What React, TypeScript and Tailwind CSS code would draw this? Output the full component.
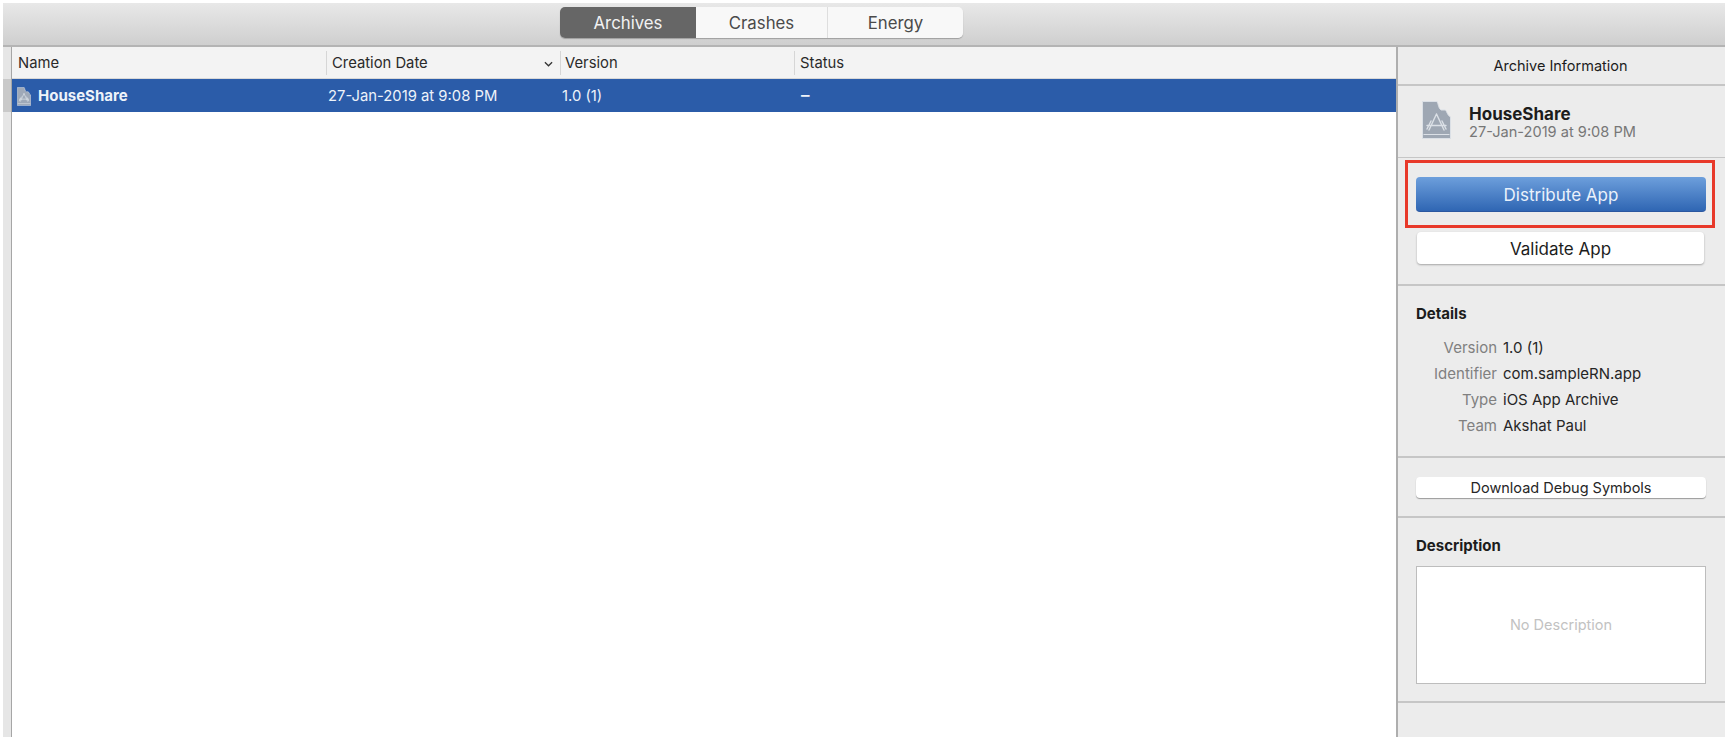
import React from 'react';

const FONT = "font-['Inter','Noto_Sans',sans-serif]";

const ArchiveIcon: React.FC<{ className?: string; fill: string; line: string }> = ({ className, fill, line }) => (
  <svg viewBox="0 0 29 38" className={className}>
    <path d="M0.5 0.5H15C16.5 3 16.5 8 19 9H23C24.5 9 25 14 28.5 16V37.5H0.5Z" fill={fill} stroke={line} strokeWidth="1" />
    <path d="M1.5 33.5H27.5" stroke={line} strokeWidth="1" fill="none" />
    <path d="M14.5 13L7 29M14.5 13L22 29M5 24.5H24M9 20L5 28M20 20L24 28" stroke={line} strokeWidth="1.4" strokeLinecap="round" fill="none" />
  </svg>
);

const tabs = [
  { label: 'Archives', w: 'w-[136px]', cls: 'bg-[#666666] text-[#f2f2f2] rounded-l-[5px]' },
  { label: 'Crashes', w: 'w-[132px]', cls: 'bg-[#f8f8f8] text-[#4a4a4a] border-r border-[#dedede]' },
  { label: 'Energy', w: 'w-[135px]', cls: 'bg-[#f8f8f8] text-[#4a4a4a] rounded-r-[5px]' },
];

const columns = [
  { label: 'Name', w: 'w-[314px]', pad: 'pl-[6px]' },
  { label: 'Creation Date', w: 'w-[234px]', pad: 'pl-[5px]', sort: true },
  { label: 'Version', w: 'w-[234px]', pad: 'pl-[4px]' },
  { label: 'Status', w: 'flex-1', pad: 'pl-[5px]' },
];

const details = [
  ['Version', '1.0 (1)'],
  ['Identifier', 'com.sampleRN.app'],
  ['Type', 'iOS App Archive'],
  ['Team', 'Akshat Paul'],
];

export default function App() {
  return (
    <div className={`${FONT} w-[1725px] h-[740px] bg-white overflow-hidden pt-[3px] pl-[3px]`}>
      <div className="h-[734px] flex flex-col">
        {/* Toolbar */}
        <div className="h-[44px] shrink-0 flex pl-[557px] pt-[4px] bg-gradient-to-b from-[#e8e8e8] to-[#cfcfcf] border-b-2 border-[#b4b4b4]">
          <div className="flex h-[31px] shadow-[0_1px_1px_rgba(0,0,0,0.25)] rounded-[5px]">
            {tabs.map(t => (
              <div key={t.label} className={`${t.w} ${t.cls} flex items-center justify-center pt-[2px] text-[16.8px]`}>
                {t.label}
              </div>
            ))}
          </div>
        </div>

        <div className="flex-1 flex min-h-0">
          {/* Row gutter */}
          <div className="w-[8px] shrink-0 bg-[#e6e6e6] flex flex-col">
            <div className="h-[32px]" />
            <div className="h-[33px] bg-[#c9c9c9]" />
          </div>
          <div className="w-[1px] shrink-0 bg-[#a6a6a6]" />

          {/* Archive table */}
          <div className="flex-1 flex flex-col min-w-0 bg-white">
            <div className="h-[32px] shrink-0 flex items-center bg-[#f3f3f3] border-b border-[#d8d8d8] text-[14.8px] text-[#2a2a2a]">
              {columns.map((c, i) => (
                <div key={c.label} className={`${c.w} ${c.pad} h-[24px] pt-[2px] flex items-center ${i > 0 ? 'border-l border-[#d6d6d6]' : ''}`}>
                  <span className="flex-1">{c.label}</span>
                  {c.sort && (
                    <svg viewBox="0 0 10 6" className="w-[9px] h-[6px] mr-[7px]">
                      <path d="M1 1L5 5L9 1" fill="none" stroke="#333333" strokeWidth="1.4" />
                    </svg>
                  )}
                </div>
              ))}
            </div>
            <div className="h-[33px] shrink-0 flex items-center pt-[1px] bg-[#2b5ca9] text-[14.8px] text-[#eef3fa]">
              <div className="w-[314px] pl-[5px] flex items-center gap-[7px]">
                <ArchiveIcon className="w-[14px] h-[19px]" fill="#9fa9b8" line="#dfe4ea" />
                <span className="font-bold text-[15px]">HouseShare</span>
              </div>
              <div className="w-[234px] pl-[2px]">27-Jan-2019 at 9:08 PM</div>
              <div className="w-[234px] pl-[2px]">1.0 (1)</div>
              <div className="flex-1 pl-[7px] text-[17px] font-semibold">–</div>
            </div>
          </div>

          {/* Archive information sidebar */}
          <div className="w-[329px] shrink-0 bg-[#ececec] border-l-2 border-[#aeaeae] flex flex-col text-[#1c1c1c]">
            <div className="h-[39px] shrink-0 flex items-center justify-center pr-[2px] text-[14.5px] border-b-2 border-[#c6c6c6]">
              Archive Information
            </div>

            <div className="h-[72px] shrink-0 flex items-center pl-[24px] border-b border-[#c6c6c6]">
              <ArchiveIcon className="w-[29px] h-[38px] -mt-[3px]" fill="#9ea7b3" line="#dbe0e6" />
              <div className="ml-[18px] mt-[2px]">
                <div className="font-bold text-[17px] leading-[19px]">HouseShare</div>
                <div className="text-[14.6px] leading-[17px] text-[#777777]">27-Jan-2019 at 9:08 PM</div>
              </div>
            </div>

            <div className="h-[128px] shrink-0 flex flex-col pt-[2px] pl-[7px] border-b-2 border-[#c6c6c6]">
              <div className="w-[310px] h-[68px] border-[3px] border-[#e8392a] pl-[8px] pt-[14px]">
                <div className="w-[290px] h-[35px] pt-[3px] rounded-[4px] bg-gradient-to-b from-[#6d9fdc] to-[#2f66b3] border-b border-[#2a57a0] flex items-center justify-center text-[17px] text-[#eaf1fb]">
                  Distribute App
                </div>
              </div>
              <div className="w-[287px] h-[32px] pt-[3px] mt-[4px] ml-[12px] rounded-[4px] bg-white shadow-[0_1px_2px_rgba(0,0,0,0.3)] flex items-center justify-center text-[17px]">
                Validate App
              </div>
            </div>

            <div className="h-[172px] shrink-0 pl-[18px] pt-[19px] border-b-2 border-[#c6c6c6]">
              <div className="font-bold text-[15px] leading-[18px]">Details</div>
              <div className="mt-[15px] flex flex-col gap-[6px]">
                {details.map(([k, v]) => (
                  <div key={k} className="flex text-[15px] leading-[20px]">
                    <div className="w-[81px] text-right text-[#808080] whitespace-nowrap">{k}</div>
                    <div className="ml-[6px] text-[#262626]">{v}</div>
                  </div>
                ))}
              </div>
            </div>

            <div className="h-[60px] shrink-0 pl-[18px] pt-[19px] border-b-2 border-[#c6c6c6]">
              <div className="w-[290px] h-[21px] rounded-[4px] bg-white shadow-[0_1px_1px_rgba(0,0,0,0.35)] flex items-center justify-center text-[14.5px] text-[#262626]">
                Download Debug Symbols
              </div>
            </div>

            <div className="h-[185px] shrink-0 pl-[18px] pt-[19px] border-b-2 border-[#c6c6c6]">
              <div className="font-bold text-[15px] leading-[18px]">Description</div>
              <div className="mt-[11px] w-[290px] h-[118px] bg-white border border-[#bdbdbd] flex items-center justify-center text-[14.5px] text-[#c2c2c2]">
                No Description
              </div>
            </div>

            <div className="flex-1" />
          </div>
        </div>
      </div>
    </div>
  );
}
